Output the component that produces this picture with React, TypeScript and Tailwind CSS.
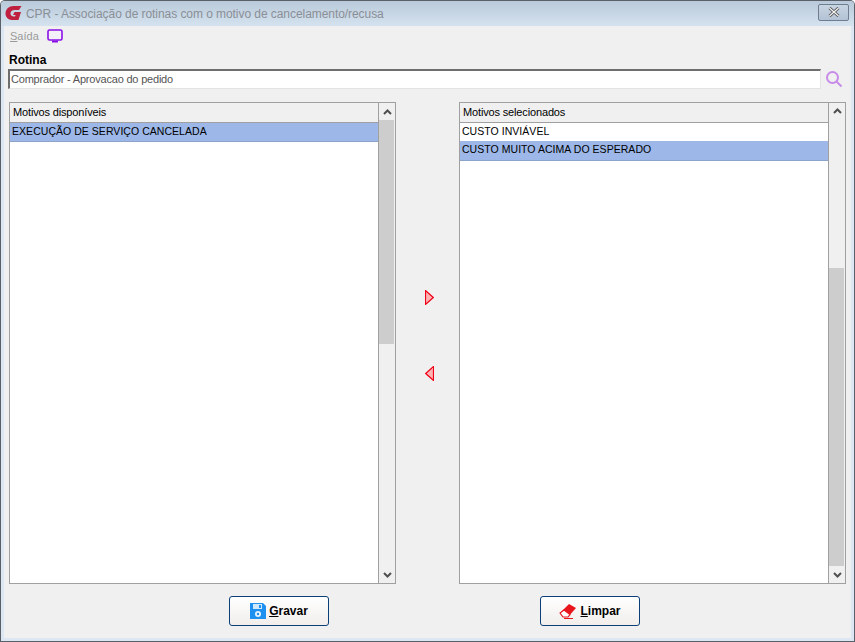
import React from "react";

function Chevron({ down }: { down?: boolean }) {
  return (
    <svg width="9" height="6" viewBox="0 0 9 6" className="block">
      <path d={down ? "M1 1 L4.5 4.5 L8 1" : "M1 5 L4.5 1.5 L8 5"} fill="none" stroke="#505050" strokeWidth="2" />
    </svg>
  );
}

function Scrollbar({ before, thumb }: { before: number; thumb: number }) {
  return (
    <div className="w-[16px] shrink-0 bg-[#f0f0f0] flex flex-col">
      <div className="h-[17px] flex items-center justify-center"><Chevron /></div>
      <div style={{ height: before }} />
      <div className="bg-[#cdcdcd] w-[15px]" style={{ height: thumb }} />
      <div className="flex-1" />
      <div className="h-[17px] flex items-center justify-center"><Chevron down /></div>
    </div>
  );
}

function ListBox({ title, rows, before, thumb }: { title: string; rows: { t: string; cls: string }[]; before: number; thumb: number }) {
  return (
    <div className="w-[387px] h-[482px] border border-[#a0a0a0] flex">
      <div className="flex-1 min-w-0 flex flex-col bg-white border-r border-[#a0a0a0]">
        <div className="h-[20px] bg-[#f0f0f0] border-b border-[#a0a0a0] pl-[3px] pb-px flex items-center text-[11px] tracking-[-0.15px] leading-none text-black">{title}</div>
        {rows.map((r) => (
          <div key={r.t} className={`pl-[2px] flex items-center text-[10.5px] tracking-[0.04px] leading-none text-black ${r.cls}`}>{r.t}</div>
        ))}
      </div>
      <Scrollbar before={before} thumb={thumb} />
    </div>
  );
}

function Tri({ left }: { left?: boolean }) {
  return (
    <svg width="9" height="15" viewBox="0 0 9 15" className="block">
      <path d={left ? "M8.5 .5 V14.5 L.7 7.5 Z" : "M.5 .5 V14.5 L8.3 7.5 Z"} fill="#ffb3b3" stroke="#f00018" strokeWidth="1.2" />
    </svg>
  );
}

function Btn({ children }: { children: React.ReactNode }) {
  return (
    <button className="w-[100px] h-[30px] rounded-[3px] border border-[#0a3f78] bg-gradient-to-b from-white to-[#f1eeec] flex items-center justify-center gap-[3px] text-[12px] font-bold text-black">
      {children}
    </button>
  );
}

export default function App() {
  return (
    <div className="w-[855px] h-[642px] overflow-hidden flex flex-col bg-[#5a6068] p-px rounded-t-[5px] [font-family:'Liberation_Sans',Arial,sans-serif]">
      <div className="flex-1 min-h-0 flex flex-col bg-[#dce7f3] rounded-t-[4px]">
        <div className="h-[25px] shrink-0 bg-gradient-to-b from-[#b9c9d9] to-[#d5e3f0] flex items-center pl-[4px] pr-[5px] rounded-t-[4px]">
          <svg width="17" height="17" viewBox="0 0 17 17" className="block shrink-0">
            <path d="M16.5 1 L14 5 H9.5 C7 5 5.5 6.5 5.5 8.5 C5.5 10.5 7 11.5 9 11.5 H10 L10.6 10 H8 L9.5 7 H16 L13.5 15 H7 C3 15 0.5 12 0.5 8.5 C0.5 4 4 1 8.5 1 Z" fill="#c0203f" />
          </svg>
          <span className="ml-[4px] text-[12px] tracking-[-0.06px] text-[#8a8f96]">CPR - Associação de rotinas com o motivo de cancelamento/recusa</span>
          <div className="ml-auto w-[31px] h-[17px] mt-[-3px] rounded-[2px] border border-[#6f7d90] bg-gradient-to-b from-[#c7d4e2] to-[#b3c3d5] flex items-center justify-center">
            <svg width="12" height="10" viewBox="0 0 12 10" className="block">
              <path d="M1.5 1 L10.5 9 M10.5 1 L1.5 9" stroke="#4a4a4a" strokeWidth="3" />
              <path d="M1.5 1 L10.5 9 M10.5 1 L1.5 9" stroke="#f2f2f2" strokeWidth="1.4" />
            </svg>
          </div>
        </div>
        <div className="flex-1 min-h-0 mx-[3px] mb-[3px] bg-[#f0f0f0] flex flex-col pl-[5px] pr-[4px]">
          <div className="h-[20px] shrink-0 flex items-center pl-[1px] gap-[8px]">
            <span className="text-[11px] text-[#9a9a9a]"><span className="underline">S</span>aída</span>
            <svg width="16" height="14" viewBox="0 0 16 14" className="block">
              <rect x="1" y="1" width="14" height="10" rx="1.5" fill="#f4f0fa" stroke="#8a10e8" strokeWidth="1.6" />
              <rect x="5" y="11.5" width="6" height="2" fill="#8a10e8" />
            </svg>
          </div>
          <div className="h-[14px] mt-[7px] shrink-0 flex items-center text-[12px] font-bold leading-none text-black">Rotina</div>
          <div className="mt-[2px] h-[20px] shrink-0 flex items-center">
            <div className="w-[813px] -ml-px h-[20px] bg-white border-t-2 border-l-2 border-[#6e6e6e] border-r border-b border-r-[#e3e3e3] border-b-[#e3e3e3] flex items-center pl-[1px] text-[11px] tracking-[-0.2px] leading-none text-[#555]">
              Comprador - Aprovacao do pedido
            </div>
            <svg width="18" height="18" viewBox="0 0 18 18" className="block ml-[4px]">
              <circle cx="7.5" cy="7.5" r="5.5" fill="none" stroke="#c78be8" strokeWidth="2" />
              <path d="M11.5 11.5 L16.5 16.5" stroke="#c78be8" strokeWidth="2" />
            </svg>
          </div>
          <div className="mt-[13px] flex shrink-0">
            <ListBox title="Motivos disponíveis" rows={[{ t: "EXECUÇÃO DE SERVIÇO CANCELADA", cls: "h-[19px] pb-[2px] bg-[#9db8e8] border-b border-[#8ea3c8]" }]} before={0} thumb={224} />
            <div className="w-[63px] flex flex-col items-center pt-[188px] pl-[4px] gap-[61px]">
              <Tri />
              <Tri left />
            </div>
            <ListBox title="Motivos selecionados" rows={[{ t: "CUSTO INVIÁVEL", cls: "h-[18px] pb-[2px] bg-white" }, { t: "CUSTO MUITO ACIMA DO ESPERADO", cls: "h-[20px] pb-[3px] bg-[#9db8e8] border-b border-[#8ea3c8]" }]} before={148} thumb={299} />
          </div>
          <div className="mt-[12px] flex shrink-0">
            <div className="ml-[220px]">
              <Btn>
                <svg width="16" height="16" viewBox="0 0 16 16" className="block">
                  <path d="M0 0 H13 L16 3 V16 H0 Z" fill="#1e90f0" />
                  <rect x="3" y="1" width="9" height="5" fill="#cfe8fb" />
                  <rect x="9" y="2" width="2" height="3" fill="#1e90f0" />
                  <circle cx="8" cy="11" r="3" fill="#e8f4fd" />
                  <circle cx="8" cy="11" r="1.2" fill="#1e90f0" />
                </svg>
                <span><span className="underline">G</span>ravar</span>
              </Btn>
            </div>
            <div className="ml-[211px]">
              <Btn>
                <svg width="18" height="16" viewBox="0 0 18 16" className="block">
                  <path d="M1 10 L10 1 L17 5 L9 14 H4 Z" fill="#e8161c" />
                  <path d="M1 10 L4 14 H9 L11 11.5 L5 7 Z" fill="#fff" stroke="#e8161c" strokeWidth="1.2" />
                  <path d="M5 15.5 H14" stroke="#e8161c" strokeWidth="1" />
                </svg>
                <span><span className="underline">L</span>impar</span>
              </Btn>
            </div>
          </div>
        </div>
      </div>
    </div>
  );
}
